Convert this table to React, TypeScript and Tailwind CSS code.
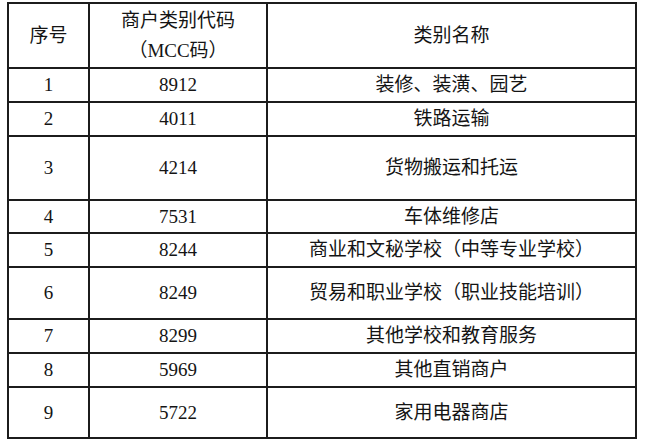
import React from 'react';

type Row = { no: string; code: string; name: string; h: string };

const rows: Row[] = [
  { no: '1', code: '8912', name: '装修、装潢、园艺', h: 'h-[34px]' },
  { no: '2', code: '4011', name: '铁路运输', h: 'h-[34px]' },
  { no: '3', code: '4214', name: '货物搬运和托运', h: 'h-[64px]' },
  { no: '4', code: '7531', name: '车体维修店', h: 'h-[33px]' },
  { no: '5', code: '8244', name: '商业和文秘学校（中等专业学校）', h: 'h-[34px]' },
  { no: '6', code: '8249', name: '贸易和职业学校（职业技能培训）', h: 'h-[52px]' },
  { no: '7', code: '8299', name: '其他学校和教育服务', h: 'h-[34px]' },
  { no: '8', code: '5969', name: '其他直销商户', h: 'h-[34px]' },
  { no: '9', code: '5722', name: '家用电器商店', h: 'h-[51px]' },
];

const cell = 'border-2 border-[#1c1c1c] p-0 text-center align-middle';

export default function App() {
  return (
    <div className="h-[446px] w-[650px] overflow-hidden bg-white pl-[7px] pt-[2px] font-['Liberation_Serif','Noto_Sans_CJK_SC',serif] text-[19px] leading-[30px] text-[#141414]">
      <table className="w-[630px] table-fixed border-collapse">
        <colgroup>
          <col className="w-[81px]" />
          <col className="w-[178px]" />
          <col />
        </colgroup>
        <thead>
          <tr className="h-[65px]">
            <th className={`${cell} font-normal`}>序号</th>
            <th className={`${cell} font-normal`}>
              <div>商户类别代码</div>
              <div>（MCC码）</div>
            </th>
            <th className={`${cell} font-normal`}>类别名称</th>
          </tr>
        </thead>
        <tbody>
          {rows.map((r) => (
            <tr key={r.no} className={r.h}>
              <td className={cell}>{r.no}</td>
              <td className={cell}>{r.code}</td>
              <td className={cell}>{r.name}</td>
            </tr>
          ))}
        </tbody>
      </table>
    </div>
  );
}
